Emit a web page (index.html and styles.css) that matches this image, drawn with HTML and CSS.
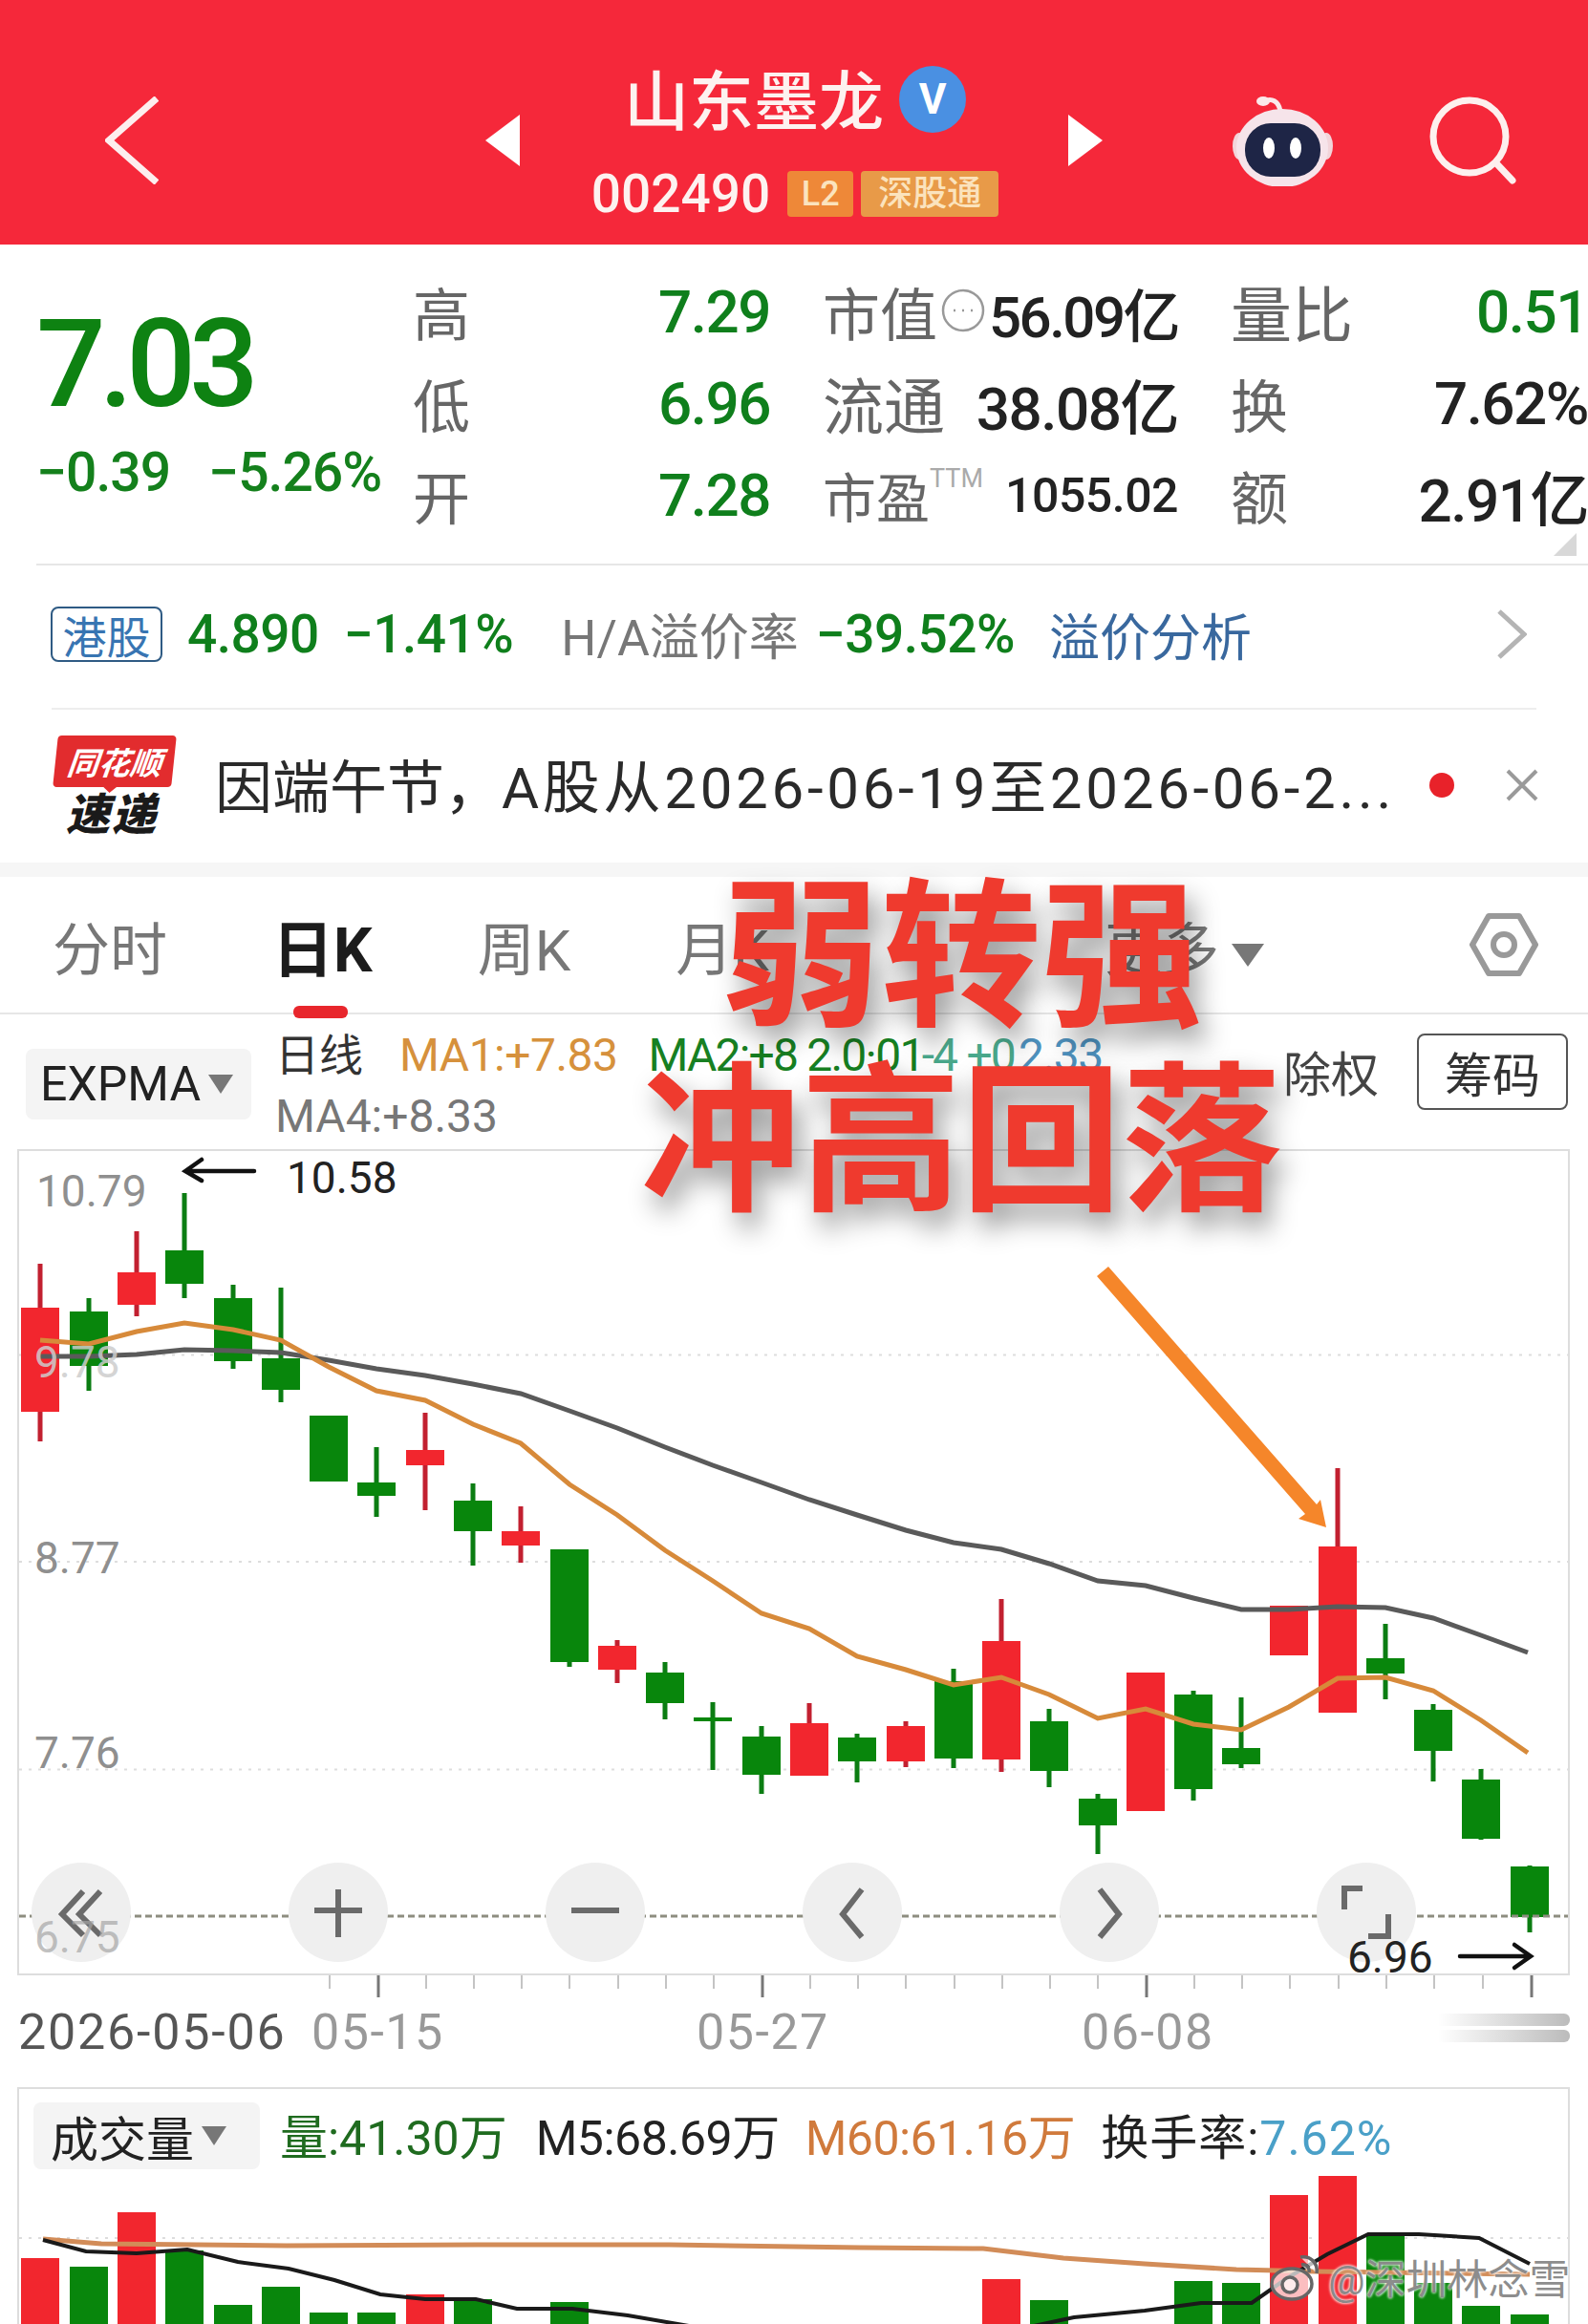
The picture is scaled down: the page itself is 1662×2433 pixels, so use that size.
FILE: index.html
```html
<!DOCTYPE html>
<html lang="zh-CN">
<head>
<meta charset="utf-8">
<title>山东墨龙 002490</title>
<link rel="stylesheet" href="styles.css">
</head>
<body>
<div class="page">
  <header class="topbar">
    <svg class="back" viewBox="0 0 56 92"><path d="M54 2 4 46l50 44" /></svg>
    <span class="tri tri-l"></span>
    <div class="stock">
      <div class="stock-name"><span>山东墨龙</span><span class="vbadge">V</span></div>
      <div class="stock-code"><span>002490</span><span class="tag tag-l2">L2</span><span class="tag tag-sgt">深股通</span></div>
    </div>
    <span class="tri tri-r"></span>
    <svg class="robot" viewBox="0 0 107 96">
      <path d="M34 7c8-4 15 0 17 10" class="ant"/>
      <ellipse cx="33" cy="7" rx="7" ry="5" fill="#fbe9ea"/>
      <ellipse cx="8" cy="54" rx="7" ry="14" fill="#f2d5da"/>
      <ellipse cx="99" cy="54" rx="7" ry="14" fill="#f2d5da"/>
      <ellipse cx="53" cy="56" rx="48" ry="41" fill="#f6e4ea"/>
      <rect x="14" y="30" width="79" height="56" rx="27" fill="#1e2546"/>
      <ellipse cx="39" cy="56" rx="6" ry="11" fill="#fff"/>
      <ellipse cx="67" cy="56" rx="6" ry="11" fill="#fff"/>
    </svg>
    <svg class="search" viewBox="0 0 92 92"><circle cx="42" cy="42" r="38"/><path d="M71 71l16 17"/></svg>
  </header>

  <section class="quote">
    <div class="q-main">
      <div class="q-price">7.03</div>
      <div class="q-change"><span>−0.39</span><span>−5.26%</span></div>
    </div>
    <div class="q-grid">
      <div class="q-cell"><span class="lbl">高</span><span class="val val-up">7.29</span></div>
      <div class="q-cell"><span class="lbl">市值<svg class="more" viewBox="0 0 46 46"><circle cx="23" cy="23" r="21"/><path d="M13 23h2m7 0h2m7 0h2"/></svg></span><span class="val val-tight">56.09亿</span></div>
      <div class="q-cell"><span class="lbl lbl-wide">量比</span><span class="val val-up">0.51</span></div>
      <div class="q-cell"><span class="lbl">低</span><span class="val val-up">6.96</span></div>
      <div class="q-cell"><span class="lbl lbl-wide">流通</span><span class="val">38.08亿</span></div>
      <div class="q-cell"><span class="lbl">换</span><span class="val">7.62%</span></div>
      <div class="q-cell"><span class="lbl">开</span><span class="val val-up">7.28</span></div>
      <div class="q-cell"><span class="lbl lbl-sm">市盈<sup>TTM</sup></span><span class="val val-sm">1055.02</span></div>
      <div class="q-cell"><span class="lbl">额</span><span class="val">2.91亿</span></div>
    </div>
    <span class="corner"></span>
  </section>

  <section class="hk">
    <span class="hk-tag">港股</span>
    <span class="hk-num green">4.890</span>
    <span class="hk-num green">−1.41%</span>
    <span class="hk-label">H/A溢价率</span>
    <span class="hk-num green hk-rate">−39.52%</span>
    <span class="hk-link">溢价分析</span>
    <svg class="hk-arrow" viewBox="0 0 32 52"><path d="M3 2l26 24L3 50"/></svg>
  </section>

  <section class="news">
    <div class="logo">
      <div class="logo-top">同花顺</div>
      <div class="logo-bottom">速递</div>
    </div>
    <div class="news-text">因端午节，<span class="news-latin">A股从2026-06-19至2026-06-2...</span></div>
    <span class="dot"></span>
    <svg class="close" viewBox="0 0 36 36"><path d="M3 3l30 30M33 3 3 33"/></svg>
  </section>
  <div class="band"></div>

  <nav class="tabs">
    <span class="tab">分时</span>
    <span class="tab tab-on">日K</span>
    <span class="tab">周K</span>
    <span class="tab">月K</span>
    <span class="tab tab-more">更多<i class="caret caret-lg"></i></span>
    <svg class="hex" viewBox="0 0 72 68"><path d="M20 4h32l17 30-17 30H20L3 34z"/><circle cx="36" cy="34" r="11"/></svg>
  </nav>

  <section class="indic">
    <div class="select"><span>EXPMA</span><i class="caret"></i></div>
    <div class="ma">
      <div class="ma-row"><span class="ma-day">日线</span><span class="ma1">MA1:+7.83</span><span class="ma2">MA2:+8 2.0<b>&#183;</b>01</span><span class="ma3">-4 +0</span><span class="ma5">2.33</span></div>
      <div class="ma-row ma4">MA4:+8.33</div>
    </div>
    <span class="chuquan">除权</span>
    <span class="chouma">筹码</span>
  </section>

  <section class="chart">
    <svg class="kline" viewBox="20 1205 1621 861">
      <path class="grid" d="M20 1418.5H1641M20 1635H1641M20 1852.5H1641"/>
      <path class="wick-g" d="M93 1359V1456M193 1249V1359M244 1345V1433M294 1348V1468M394 1515V1588M495 1553V1639M596 1740V1745M696 1740V1800M746 1782V1853M797 1807V1878M897 1815V1866M998 1747V1851M1098 1789V1871M1149 1878V1941M1249 1770V1885M1299 1777V1851M1450 1700V1779M1500 1784V1865M1550 1852V1926M1601 1953V2023"/>
      <path class="wick-r" d="M42 1323V1509M143 1289V1378M445 1479V1581M545 1577V1636M646 1717V1762M847 1783V1859M948 1802V1850M1048 1674V1855M1400 1537V1619"/>
      <path class="body-g" d="M73 1373h40v57H73zM173 1309h40v35H173zM224 1359h40v66H224zM274 1422h40v33H274zM324 1482h40v69H324zM374 1552h40v14H374zM475 1571h40v32H475zM576 1622h40v118H576zM676 1751h40v32H676zM726 1798h40v4H726zM777 1818h40v40H777zM877 1819h40v25H877zM978 1760h40v81H978zM1078 1802h40v52H1078zM1129 1883h40v28H1129zM1229 1774h40v99H1229zM1279 1830h40v17H1279zM1430 1736h40v16H1430zM1480 1790h40v43H1480zM1530 1863h40v62H1530zM1581 1954h40v53H1581z"/>
      <path class="body-r" d="M22 1369h40v109H22zM123 1332h40v34H123zM425 1518h40v16H425zM525 1603h40v15H525zM626 1723h40v25H626zM827 1804h40v55H827zM928 1807h40v37H928zM1028 1718h40v124H1028zM1179 1751h40v145H1179zM1329 1681h40v52H1329zM1380 1619h40v174H1380z"/>
      <path class="low-line" d="M20 2006H1641"/>
      <polyline class="line-gray" points="42,1420 93,1420 143,1418 193,1413 244,1414 294,1416 344,1424 394,1433 445,1440 495,1449 545,1459 596,1477 646,1495 696,1515 746,1534 797,1552 847,1570 897,1586 948,1602 998,1615 1048,1622 1098,1637 1149,1655 1199,1660 1249,1673 1299,1685 1349,1685 1400,1682 1450,1683 1500,1694 1550,1712 1599,1730"/>
      <polyline class="line-orange" points="42,1403 93,1407 143,1394 193,1385 244,1392 294,1403 344,1431 394,1456 445,1466 495,1491 545,1511 596,1554 646,1586 696,1623 746,1655 797,1689 847,1705 897,1734 948,1748 998,1764 1048,1756 1098,1774 1149,1799 1199,1789 1249,1805 1299,1811 1349,1787 1400,1757 1450,1756 1500,1770 1550,1801 1599,1835"/>
      <g class="labels">
        <text x="38" y="1263">10.79</text>
        <text x="36" y="1442" class="label-over">9.78</text>
        <text x="36" y="1647">8.77</text>
        <text x="36" y="1851">7.76</text>
      </g>
      <g class="extreme">
        <path d="M266 1226H196m15-12-17 12 17 10"/>
        <text x="300" y="1249">10.58</text>
        <path d="M1528 2048h72m-15-12 17 12-17 12"/>
      </g>
      <path class="callout" d="M1148 1336 1160 1326 1378 1575 1382 1570 1388 1599 1359 1590 1366 1585z"/>
    </svg>
    <div class="ctrl">
      <span class="ctrl-btn"><svg viewBox="0 0 60 60"><path d="M32 8 10 32l22 22M50 8 28 32l22 22"/></svg></span>
      <span class="ctrl-btn"><svg viewBox="0 0 60 60"><path d="M30 6v50M5 28h50"/></svg></span>
      <span class="ctrl-btn"><svg viewBox="0 0 60 60"><path d="M5 28h50"/></svg></span>
      <span class="ctrl-btn"><svg viewBox="0 0 60 60"><path d="M40 6 20 32l20 24"/></svg></span>
      <span class="ctrl-btn"><svg viewBox="0 0 60 60"><path d="M20 6 40 32 20 56"/></svg></span>
      <span class="ctrl-btn"><svg viewBox="0 0 60 60"><path d="M26 5H7v22M53 32v23H32"/></svg></span>
    </div>
    <span class="label-low">6.75</span>
    <span class="label-min">6.96</span>
  </section>

  <section class="axis">
    <svg class="ticks" viewBox="0 0 1662 26">
      <path class="tick-minor" d="M345 0v14M446 0v14M496 0v14M546 0v14M596 0v14M647 0v14M697 0v14M747 0v14M848 0v14M898 0v14M948 0v14M999 0v14M1049 0v14M1099 0v14M1149 0v14M1250 0v14M1300 0v14M1350 0v14M1401 0v14M1451 0v14M1501 0v14M1552 0v14"/>
      <path class="tick-major" d="M396 0v23M798 0v23M1200 0v23M1603 0v23"/>
    </svg>
    <div class="dates">
      <span class="date-first">2026-05-06</span>
      <span class="date date1">05-15</span>
      <span class="date date2">05-27</span>
      <span class="date date3">06-08</span>
      <span class="scroll"><i></i><i></i></span>
    </div>
  </section>

  <section class="volume">
    <div class="vol-head">
      <div class="select select-vol"><span>成交量</span><i class="caret"></i></div>
      <span class="v-g">量:41.30万</span>
      <span class="v-b">M5:68.69万</span>
      <span class="v-o">M60:61.16万</span>
      <span class="v-b v-turn">换手率:<em>7.62%</em></span>
    </div>
    <svg class="vol-svg" viewBox="20 2272 1621 161">
      <path class="grid" d="M20 2343H1641"/>
      <path class="body-r" d="M22 2364h40v70H22zM123 2316h40v118H123zM425 2402h40v32H425zM1028 2386h40v48H1028zM1329 2298h40v136H1329zM1380 2278h40v156H1380z"/>
      <path class="body-g" d="M73 2373h40v61H73zM173 2356h40v78H173zM224 2413h40v21H224zM274 2394h40v40H274zM324 2421h40v13H324zM374 2421h40v13H374zM475 2407h40v27H475zM576 2410h40v24H576zM1078 2408h40v26H1078zM1229 2388h40v46H1229zM1279 2390h40v44H1279zM1430 2340h40v94H1430zM1480 2390h40v44H1480zM1530 2414h40v20H1530zM1581 2423h40v11H1581z"/>
      <polyline class="vol-orange" points="45,2344 106,2349 300,2351 500,2350 700,2350 900,2353 1029,2354 1113,2364 1198,2370 1294,2376 1378,2378 1601,2381"/>
      <polyline class="vol-black" points="45,2345 90,2357 143,2359 196,2355 249,2368 302,2375 350,2387 398,2402 445,2407 498,2407 541,2417 599,2417 657,2424 721,2435"/>
      <polyline class="vol-black" points="1082,2435 1124,2426 1198,2419 1257,2411 1310,2411 1347,2385 1389,2360 1432,2339 1485,2339 1548,2343 1601,2370"/>
    </svg>
  </section>

  <div class="headline headline-1">弱转强</div>
  <div class="headline headline-2">冲高回落</div>

  <div class="watermark">
    <svg viewBox="0 0 56 56"><ellipse cx="24" cy="36" rx="21" ry="16"/><circle cx="22" cy="37" r="8"/><path d="M33 8c10-2 19 6 17 17M34 16c5-1 9 3 8 8"/></svg>
    <span>@深圳林念雪</span>
  </div>
</div>
</body>
</html>
```

FILE: styles.css
```css
* { box-sizing: border-box; }
html, body { margin: 0; padding: 0; background: #fff; }
body { font-family: Roboto, "Noto Sans CJK SC", sans-serif; color: #222; }
.page { position: relative; width: 1662px; height: 2433px; overflow: hidden; background: #fff; }
.green { color: #0f7f1c; }

/* top bar */
.topbar { height: 256px; background: #f5283a; display: flex; align-items: center; padding: 38px 0 0 110px; color: #fff; }
.back { width: 56px; height: 92px; fill: none; stroke: #fdeeee; stroke-width: 7; }
.tri { width: 0; height: 0; border-top: 27px solid transparent; border-bottom: 27px solid transparent; }
.tri-l { border-right: 36px solid #fff; margin-left: 342px; }
.tri-r { border-left: 36px solid #fff; }
.stock { width: 426px; margin: -38px 73px 0 75px; display: flex; flex-direction: column; align-items: center; gap: 29px; padding-top: 38px; }
.stock-name { display: flex; align-items: center; gap: 16px; font-size: 68px; font-weight: 500; line-height: 82px; color: #fdf2f0; }
.vbadge { width: 70px; height: 70px; border-radius: 50%; background: #4a90e2; color: #fff; font-size: 44px; font-weight: 700; display: flex; align-items: center; justify-content: center; margin-bottom: 8px; }
.stock-code { display: flex; align-items: center; gap: 8px; font-size: 55px; font-weight: 500; line-height: 50px; color: #fdf2f0; }
.stock-code > span:first-child { margin-right: 10px; }
.tag { height: 48px; border-radius: 4px; font-size: 36px; display: flex; align-items: center; justify-content: center; color: #fbe3bd; }
.tag-l2 { width: 69px; background: #ee8838; }
.tag-sgt { width: 144px; background: #e89a48; }
.robot { width: 107px; height: 96px; margin-left: 135px; }
.ant { fill: none; stroke: #fbe9ea; stroke-width: 5; }
.search { width: 92px; height: 92px; margin-left: 100px; fill: none; stroke: #fdf0ee; stroke-width: 7; stroke-linecap: round; }

/* quote block */
.quote { position: relative; height: 336px; margin-left: 38px; border-bottom: 2px solid #e6e6e6; display: flex; padding-top: 25px; }
.q-main { width: 394px; }
.q-price { font-weight: 500; font-size: 128px; line-height: 150px; letter-spacing: -7px; color: #0e8212; margin-top: 25px; }
.q-change { display: flex; gap: 40px; font-size: 57px; font-weight: 500; line-height: 60px; letter-spacing: -1px; color: #14801c; margin-top: 9px; }
.q-grid { width: 1230px; height: 288px; margin-top: -4px; display: grid; grid-template-columns: 374px 372px 374px; column-gap: 55px; grid-auto-rows: 96px; }
.q-cell { display: flex; align-items: center; justify-content: space-between; }
.lbl { font-size: 60px; color: #666; display: flex; align-items: center; flex: none; white-space: nowrap; }
.lbl-wide { font-size: 64px; }
.lbl sup { font-size: 27px; color: #aaa; align-self: flex-start; margin-top: 8px; }
.lbl-sm { font-size: 56px; }
.val { font-size: 62px; font-weight: 500; letter-spacing: -1.5px; color: #222; white-space: nowrap; margin-top: 3px; }
.val-up { color: #0f7f1c; }
.val-tight { font-size: 60px; letter-spacing: -2.5px; }
.val-sm { font-size: 50px; letter-spacing: -0.5px; }
.more { width: 46px; height: 46px; margin-left: 4px; fill: none; stroke: #999; stroke-width: 2.5; }
.corner { position: absolute; right: 12px; bottom: 8px; border-left: 24px solid transparent; border-bottom: 24px solid #d8d8d8; }

/* HK line */
.hk { height: 151px; margin: 0 54px; padding-bottom: 6px; display: flex; align-items: center; border-bottom: 2px solid #eee; position: relative; }
.hk-tag { width: 117px; height: 58px; margin-left: -1px; border: 2px solid #2f5b84; border-radius: 8px; color: #3875b2; font-size: 46px; display: flex; align-items: center; justify-content: center; }
.hk-num { font-size: 55px; font-weight: 500; margin-left: 26px; letter-spacing: -0.5px; }
.hk-label { font-size: 52px; color: #777; margin-left: 50px; }
.hk-rate { margin-left: 18px; }
.hk-link { font-size: 53px; color: #39689e; margin-left: 36px; }
.hk-arrow { width: 32px; height: 52px; margin-left: auto; margin-right: 10px; fill: none; stroke: #b4b4b4; stroke-width: 5; }

/* news line */
.news { height: 160px; display: flex; align-items: center; padding: 0 0 8px 55px; }
.logo { width: 130px; display: flex; flex-direction: column; align-items: center; margin-top: 10px; }
.logo-top { position: relative; width: 124px; height: 54px; background: #e22c2e; border-radius: 4px; transform: skewX(-6deg); color: #fff; font-size: 33px; font-weight: 700; font-style: italic; display: flex; align-items: center; justify-content: center; }
.logo-top::after { content: ""; position: absolute; left: 52px; bottom: -6px; border-left: 8px solid transparent; border-right: 8px solid transparent; border-top: 7px solid #e22c2e; }
.logo-bottom { font-size: 46px; font-weight: 900; font-style: italic; line-height: 50px; color: #1a1a1a; margin: 4px 6px 0 0; letter-spacing: 2px; }
.news-text { font-size: 60px; color: #2a2a2a; margin-left: 40px; width: 1249px; white-space: nowrap; }
.news-latin { letter-spacing: 3.7px; }
.dot { width: 26px; height: 26px; border-radius: 50%; background: #e8222a; margin: 6px 0 0 22px; }
.close { width: 36px; height: 36px; margin: 6px 0 0 53px; fill: none; stroke: #9a9a9a; stroke-width: 4; }
.band { height: 15px; background: #f6f6f6; }

/* tabs */
.tabs { height: 144px; display: flex; align-items: center; padding: 0 52px 0 55px; border-bottom: 2px solid #e6e6e6; position: relative; }
.tab { font-size: 60px; color: #777; margin-right: 110px; }
.tab-on { position: relative; color: #1c1c1c; font-size: 64px; font-weight: 700; }
.tab-on::after { content: ""; position: absolute; left: 22px; right: 26px; bottom: -31px; height: 13px; border-radius: 6px; background: #e8262c; }
.tab-more { margin-right: 0; position: absolute; left: 1156px; white-space: nowrap; }
.caret { display: inline-block; border-left: 13px solid transparent; border-right: 13px solid transparent; border-top: 20px solid #777; margin-left: 8px; vertical-align: middle; }
.caret-lg { border-left-width: 17px; border-right-width: 17px; border-top-width: 24px; margin-left: 13px; }
.hex { width: 72px; height: 68px; margin-left: auto; fill: none; stroke: #999; stroke-width: 6; stroke-linejoin: round; }

/* indicator row */
.indic { height: 141px; display: flex; align-items: center; padding: 0 19px 0 27px; }
.select { width: 236px; height: 74px; background: #f4f4f4; border-radius: 8px; display: flex; align-items: center; padding-left: 15px; font-size: 50px; color: #222; margin-top: 5px; }
.ma { margin: 8px 0 0 25px; width: 1055px; font-size: 48px; line-height: 64px; }
.ma-row { display: flex; align-items: center; white-space: nowrap; }
.ma-day { font-size: 46px; color: #333; margin-right: 38px; }
.ma1 { color: #d6913c; margin-right: 32px; letter-spacing: -0.5px; }
.ma2 { color: #178022; letter-spacing: -1.8px; }
.ma2 b { font-weight: 400; }
.ma3 { color: #4aa98c; margin-left: -2px; letter-spacing: -1.8px; }
.ma5 { color: #4f93c0; margin-left: 4px; letter-spacing: -1.5px; }
.ma4 { color: #777; }
.chuquan { font-size: 50px; color: #444; width: 140px; margin-top: -24px; }
.chouma { width: 158px; height: 80px; margin-top: -22px; border: 2px solid #555; border-radius: 8px; font-size: 50px; color: #333; display: flex; align-items: center; justify-content: center; }

/* chart */
.chart { position: relative; width: 1625px; height: 865px; margin-left: 18px; border: 2px solid #ddd; }
.kline { display: block; width: 1621px; height: 861px; }
.grid { fill: none; stroke: #ddd; stroke-width: 2; stroke-dasharray: 3 7; }
.wick-g { fill: none; stroke: #0b7d12; stroke-width: 5; }
.wick-r { fill: none; stroke: #c22030; stroke-width: 5; }
.body-g { fill: #08860c; }
.body-r { fill: #f2262e; }
.low-line { fill: none; stroke: #8d8d80; stroke-width: 3; stroke-dasharray: 7 4; }
.line-gray { fill: none; stroke: #5a5a5a; stroke-width: 5; }
.line-orange { fill: none; stroke: #d78a3a; stroke-width: 5; }
.labels text { font-size: 46px; fill: #8f8f8f; }
.labels .label-over { fill: rgba(205,205,205,0.85); }
.extreme text { font-size: 46px; fill: #222; }
.extreme path { fill: none; stroke: #111; stroke-width: 4.5; stroke-linecap: round; }
.callout { fill: #f5862a; }
.ctrl { position: absolute; left: 13px; top: 745px; width: 1449px; display: flex; justify-content: space-between; }
.ctrl-btn { width: 104px; height: 104px; border-radius: 50%; background: #efefef; display: flex; align-items: center; justify-content: center; }
.ctrl-btn svg { width: 60px; height: 60px; fill: none; stroke: #6a6a6a; stroke-width: 6; }
.label-low { position: absolute; left: 16px; top: 796px; font-size: 46px; line-height: 54px; color: rgba(165,165,165,0.7); }
.label-min { position: absolute; left: 1390px; top: 817px; font-size: 46px; line-height: 54px; color: #222; }

/* axis */
.axis { height: 117px; }
.ticks { display: block; width: 1662px; height: 26px; fill: none; }
.tick-minor { stroke: #c4c4c4; stroke-width: 2; }
.tick-major { stroke: #777; stroke-width: 3; }
.dates { position: relative; height: 50px; margin-top: 9px; padding-left: 19px; font-size: 52px; line-height: 50px; color: #555; display: flex; }
.date-first { letter-spacing: 1.8px; }
.date { position: absolute; top: 0; color: #999; letter-spacing: 1.5px; }
.date1 { left: 326px; }
.date2 { left: 729px; }
.date3 { left: 1132px; }
.scroll { position: absolute; right: 19px; top: 5px; width: 138px; display: flex; flex-direction: column; gap: 4px; }
.scroll i { display: block; height: 13px; border-radius: 0 6px 6px 0; background: linear-gradient(90deg, rgba(190,190,190,0), #bbb); }

/* volume */
.volume { margin-left: 18px; width: 1625px; height: 260px; border: 2px solid #ddd; border-bottom: 0; }
.vol-head { height: 85px; display: flex; align-items: center; padding-top: 8px; font-size: 50px; letter-spacing: -0.5px; white-space: nowrap; }
.select-vol { margin: 4px 21px 0 15px; width: 237px; height: 70px; padding-left: 18px; font-size: 50px; letter-spacing: 0; }
.v-g { color: #1f6b1f; margin-right: 30px; letter-spacing: 0; }
.v-b { color: #222; margin-right: 27px; }
.v-o { color: #d07a3c; margin-right: 27px; }
.v-turn { margin-right: 0; letter-spacing: 1px; }
.v-turn em { font-style: normal; color: #4aa0c8; }
.vol-svg { display: block; width: 1621px; height: 161px; overflow: hidden; }
.vol-orange { fill: none; stroke: #d28c58; stroke-width: 5; }
.vol-black { fill: none; stroke: #1a1a1a; stroke-width: 4; }

/* overlays */
.headline { position: absolute; font-family: "Noto Sans CJK SC", sans-serif; font-weight: 700; font-size: 168px; line-height: 180px; color: #ef3a2e; white-space: nowrap; text-shadow: 8px 16px 28px rgba(0,0,0,0.42); }
.headline-1 { left: 754px; top: 898px; }
.headline-2 { left: 670px; top: 1091px; }
.watermark { position: absolute; left: 1328px; top: 2352px; display: flex; align-items: center; gap: 6px; color: rgba(120,120,120,0.85); font-size: 43px; text-shadow: 0 0 3px #fff, 0 0 3px #fff; }
.watermark svg { width: 56px; height: 56px; fill: rgba(255,255,255,0.7); stroke: #666; stroke-width: 3.5; }
```
